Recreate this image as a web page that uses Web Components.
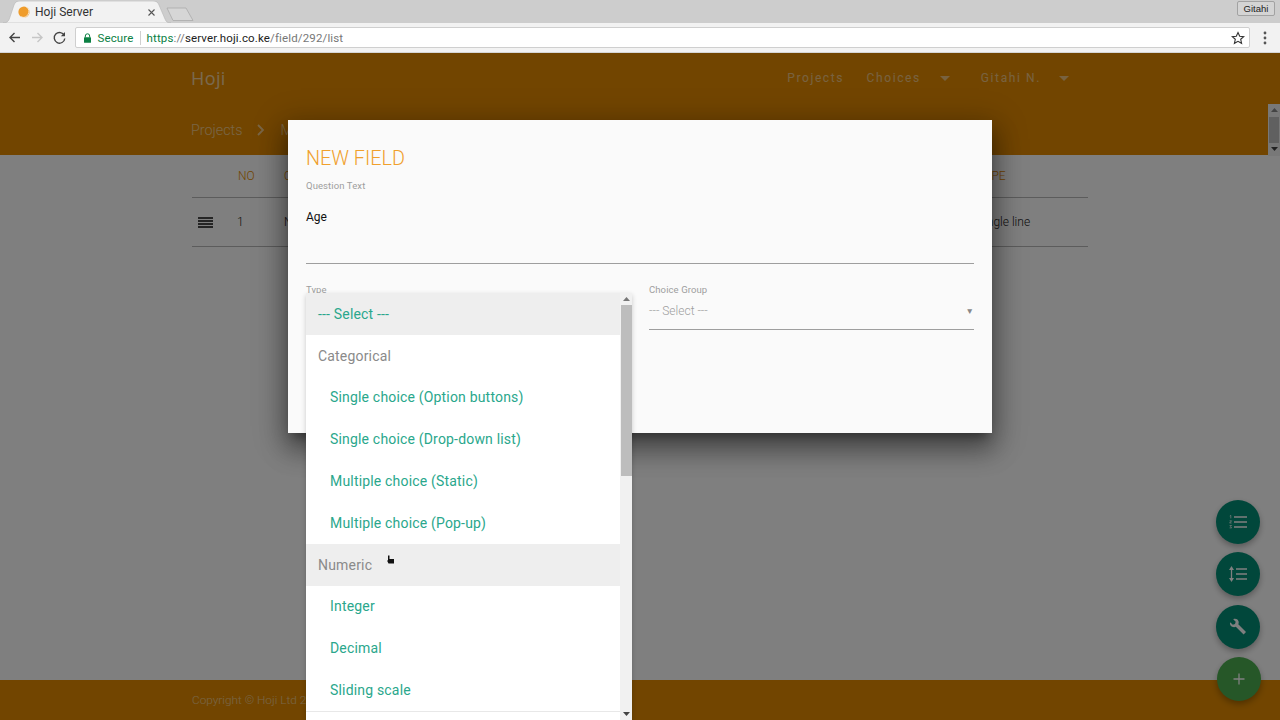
<!DOCTYPE html>
<html lang="en"><head><meta charset="utf-8"><title>Hoji Server</title>
<style>
html,body{margin:0;padding:0;height:720px;overflow:hidden;background:#fff;font-family:Roboto,"Liberation Sans",sans-serif}
</style></head><body>
<hoji-app></hoji-app>
<script>
function def(name, html){
  customElements.define(name, class extends HTMLElement{
    constructor(){super();this.attachShadow({mode:'open'}).innerHTML=html;}
  });
}
def('browser-chrome',`<style>
:host{display:block;height:53px;background:#cdcdcd;font-family:Roboto,"Liberation Sans",sans-serif;box-sizing:border-box}
.strip{height:23px;display:flex;align-items:flex-end;padding-left:8px;position:relative}
.tab{width:157px;height:22px;position:relative;display:flex;align-items:center;padding:0 0 0 10px;box-sizing:border-box;font-size:12px;color:#333}
.tab svg.shape{position:absolute;left:-5px;top:0}
.tab>*:not(.shape){position:relative}
.fav{width:12px;height:12px;margin-right:5px}
.t{flex:1}
.x{width:9px;height:9px;margin-right:9px}
.new{width:28px;height:15px;margin-left:1px;margin-bottom:1px}
.user{position:absolute;right:5px;top:1px;width:36px;height:13px;border:1px solid #a2a2a2;border-radius:2px;font-size:9.500px;line-height:13px;text-align:center;color:#222;background:#d4d4d4;font-family:"Liberation Sans",sans-serif}
.bar{height:30px;background:#f2f2f2;display:flex;align-items:center;box-sizing:border-box;border-bottom:1px solid #d6d6d6;padding:0 0 0 7px}
.nav{width:15px;height:15px;margin-right:7.500px;display:block}
.omni{flex:1;height:21px;background:#fff;border:1px solid #cfcfcf;border-radius:2px;display:flex;align-items:center;font-size:11.500px;box-sizing:border-box;letter-spacing:.14px}
.lock{width:9px;height:10px;margin-left:7px;margin-right:6px}
.sec{color:#0b8043}
.sep{width:1px;height:14px;background:#d0d0d0;margin:0 6px 0 6px}
.s{color:#0b8043}.g{color:#777}.d{color:#222}
.url{flex:1}
.star{width:14px;height:14px;margin-right:4px}
.menu{width:16px;height:16px;margin:0 7px}
</style>
<div class="strip">
<div class="tab"><svg class="shape" width="176" height="22" viewBox="0 0 176 22"><path d="M0 22C5 22 6 19 7 16L11 4C12 1 14 0 17 0H150C153 0 155 1 156 4L162 18C163 21 165 22 168 22Z" fill="#f2f2f2" stroke="#b5b5b5" stroke-width=".6"/></svg>
<svg class="fav" viewBox="0 0 12 12"><circle cx="6" cy="6" r="5.600" fill="#ef9c2b"/><path d="M8.600 1.200A5.600 5.600 0 0 1 3 10.800" fill="none" stroke="#f7f7f7" stroke-width=".8"/></svg>
<span class="t">Hoji Server</span>
<svg class="x" viewBox="0 0 9 9"><path d="M1.500 1.500l6 6M7.500 1.500l-6 6" stroke="#555" stroke-width="1.100"/></svg></div>
<svg class="new" viewBox="0 0 28 15"><path d="M1 1H20L27 13.500H7Z" fill="#d6d6d6" stroke="#a9a9a9" stroke-width=".8"/></svg>
<div class="user">Gitahi</div>
</div>
<div class="bar">
<svg class="nav" viewBox="0 0 15 15"><path d="M13 7.500H3M7.500 3L3 7.500 7.500 12" fill="none" stroke="#444" stroke-width="1.400"/></svg>
<svg class="nav" viewBox="0 0 15 15"><path d="M2 7.500H12M7.500 3L12 7.500 7.500 12" fill="none" stroke="#c6c6c6" stroke-width="1.400"/></svg>
<svg class="nav" viewBox="0 0 15 15"><path d="M12.300 5.500A5.300 5.300 0 1 0 12.800 8.500" fill="none" stroke="#444" stroke-width="1.400"/><path d="M13 2V6.200H8.800Z" fill="#444"/></svg>
<div class="omni">
<svg class="lock" viewBox="0 0 9 10"><path d="M2.300 4.500V3a2.200 2.200 0 0 1 4.400 0V4.500" fill="none" stroke="#0b8043"/><rect x="1" y="4.300" width="7" height="5.500" rx=".6" fill="#0b8043"/></svg>
<span class="sec">Secure</span><span class="sep"></span>
<span class="url"><span class="s">https</span><span class="g">://</span><span class="d">server.hoji.co.ke</span><span class="g">/field/292/list</span></span>
<svg class="star" viewBox="0 0 14 14"><path d="M7 1.500l1.700 3.700 4 .4-3 2.700.9 4L7 10.300l-3.600 2 .9-4-3-2.700 4-.4Z" fill="none" stroke="#333" stroke-width="1.100"/></svg>
</div>
<svg class="menu" viewBox="0 0 16 16"><circle cx="8" cy="3" r="1.400" fill="#555"/><circle cx="8" cy="8" r="1.400" fill="#555"/><circle cx="8" cy="13" r="1.400" fill="#555"/></svg>
</div>`);

def('app-header',`<style>
:host{display:block;height:102px;background:#e48b00;color:#fff;box-sizing:border-box;padding:0 211px 0 191px}
.top{height:50px;display:flex;align-items:center;justify-content:space-between}
.brand{font:500 18px "Open Sans","Liberation Sans",sans-serif;letter-spacing:.4px;opacity:.62}
nav{display:flex;align-items:center;font:400 12px Roboto,sans-serif;letter-spacing:1.600px;color:#ffffff;opacity:.5}
nav span{display:block}
.caret{width:0;height:0;border:5px solid transparent;border-top:5px solid #fff;border-bottom:0;margin:0 0 0 19px}
.caret.last{margin-left:18px}
.gap{width:31px}
.crumbs{height:52px;display:flex;align-items:center;font:300 14.300px Roboto,sans-serif;padding-top:2px;box-sizing:border-box;opacity:.55}
.crumbs svg{margin:0 14px}
</style>
<div class="top"><div class="brand">Hoji</div>
<nav><span>Projects</span><span style="width:22.500px"></span><span>Choices</span><span class="caret"></span><span class="gap"></span><span>Gitahi N.</span><span class="caret last"></span></nav></div>
<div class="crumbs"><span>Projects</span><svg width="10" height="12" viewBox="0 0 10 12"><path d="M2 1l5 5-5 5" fill="none" stroke="#fff" stroke-width="1.800"/></svg><span>M</span></div>`);

def('field-table',`<style>
:host{display:block;margin:0 192px;font:300 12px Roboto,sans-serif;color:#222}
.row{display:grid;grid-template-columns:46px 46px 1fr 111px;align-items:center;box-sizing:border-box;border-bottom:1px solid #b8b8b8}
.head{height:43px;color:#e48b00;font-size:12px}
.body{height:49px;font-size:12px}
.ic{width:15px;height:11px;margin-left:6px;display:block}
.n{margin-left:-1px}
</style>
<div class="row head"><span></span><span>NO</span><span>Q</span><span>TYPE</span></div>
<div class="row body"><svg class="ic" viewBox="0 0 15 11"><path d="M0 1h15M0 4h15M0 7h15M0 10h15" stroke="#111" stroke-width="1.300"/></svg><span class="n">1</span><span>N</span><span>Single line</span></div>`);

def('app-footer',`<style>
:host{display:block;height:40px;background:#e48b00;box-sizing:border-box;padding:13px 0 0 192px;font:300 11.800px Roboto,sans-serif;color:#fff}
span{opacity:.55}
</style><span>Copyright © Hoji Ltd 2017</span>`);

def('form-field',`<style>
:host{display:block;font-family:Roboto,sans-serif}
.l{font-size:9.500px;color:#9e9e9e;letter-spacing:.1px;line-height:12px;display:block}
</style><span class="l"><slot name="label"></slot></span><slot></slot>`);

def('field-modal',`<style>
:host{display:block;width:704px;height:313px;background:#fafafa;box-sizing:border-box;padding:27px 18px 0;box-shadow:0 16px 24px 2px rgba(0,0,0,.32),0 6px 30px 5px rgba(0,0,0,.22),0 8px 10px -5px rgba(0,0,0,.35);font-family:Roboto,sans-serif}
h2{margin:0;font:300 19.800px/24px Roboto,sans-serif;color:#f0a02c;height:33px}
.val{font-size:12px;color:#111;padding-top:17px;box-sizing:border-box;line-height:16px;height:72px;border-bottom:1px solid #9e9e9e}
.cols{display:grid;grid-template-columns:325px 325px;column-gap:18px;margin-top:20px}
.sel{height:34px;border-bottom:1px solid #9e9e9e;display:flex;justify-content:space-between;align-items:center;font-size:12px;font-weight:300;color:#9e9e9e;padding-bottom:3px;box-sizing:border-box}
.arr{font-size:8.500px;color:#888;font-family:"DejaVu Sans",sans-serif}
</style>
<h2>NEW FIELD</h2>
<form-field><span slot="label">Question Text</span><div class="val">Age</div></form-field>
<div class="cols">
<form-field><span slot="label">Type</span><div class="sel"></div></form-field>
<form-field><span slot="label">Choice Group</span><div class="sel"><span>--- Select ---</span><span class="arr">▼</span></div></form-field>
</div>`);

def('select-option',`<style>
:host{display:flex;align-items:center;height:41.800px;box-sizing:border-box;padding-left:24px;font:400 14px Roboto,sans-serif;color:#2aa78c;white-space:nowrap;letter-spacing:.18px}
:host([top]){padding-left:12px}
:host([group]){padding-left:12px;color:#8a8a8a}
:host([active]){background:#eeeeee}
</style><slot></slot>`);

def('select-menu',`<style>
:host{display:flex;width:326px;height:427px;background:#fff;box-shadow:0 2px 5px rgba(0,0,0,.2);overflow:hidden}
.list{width:314px;flex:none;overflow:hidden}
.track{width:12px;flex:none;background:#f1f1f1;display:flex;flex-direction:column;align-items:center}
.b{height:12px;flex:none;display:flex;align-items:center;justify-content:center}
.thumb{width:11px;height:171px;background:#bdbdbd;flex:none}
.sp{flex:1}
.end{border-top:1px solid #e8e8e8;height:9px}
</style>
<div class="list"><slot></slot><div class="end"></div></div>
<div class="track"><div class="b"><svg width="7" height="4" viewBox="0 0 7 4"><path d="M3.500 0L7 4H0Z" fill="#777"/></svg></div><div class="thumb"></div><div class="sp"></div><div class="b"><svg width="7" height="4" viewBox="0 0 7 4"><path d="M0 0H7L3.500 4Z" fill="#444"/></svg></div></div>`);

def('fab-button',`<style>
:host{display:flex;width:44px;height:44px;border-radius:50%;align-items:center;justify-content:center;background:var(--bg,#028f76);box-shadow:0 3px 6px rgba(0,0,0,.3)}
</style><slot></slot>`);

def('fab-stack',`<style>
:host{display:flex;flex-direction:column;gap:8.500px}
</style><slot></slot>`);

def('page-scrollbar',`<style>
:host{display:flex;flex-direction:column;align-items:center;width:12px;height:52px;background:#f1f1f1;justify-content:space-between}
.t{width:10px;height:26px;background:#c1c1c1;flex:none}
</style><svg width="7" height="13" viewBox="0 0 7 13"><path d="M3.500 4L7 8H0Z" fill="#888"/></svg><div class="t"></div><svg width="7" height="13" viewBox="0 0 7 13"><path d="M0 4H7L3.500 8Z" fill="#444"/></svg>`);

def('hoji-app',`<style>
:host{display:flex;flex-direction:column;width:1280px;height:720px;position:relative;overflow:hidden}
.page{flex:1;position:relative;display:flex;flex-direction:column;min-height:0;background:#fff}
.main{flex:1}
.veil{position:absolute;inset:0;background:rgba(0,0,0,.5)}
field-modal{position:absolute;left:288px;top:67px}
select-menu{position:absolute;left:306px;top:240px}
fab-stack{position:absolute;left:1216px;top:446.500px}
.plus{position:absolute;left:1217px;top:604px}
page-scrollbar{position:absolute;right:0;top:51px}
svg{display:block}
</style>
<browser-chrome></browser-chrome>
<div class="page">
<app-header></app-header>
<div class="main"><field-table></field-table></div>
<app-footer></app-footer>
<page-scrollbar></page-scrollbar>
<fab-stack>
<fab-button><svg width="18" height="14" viewBox="0 0 18 14"><path d="M5 2h13M5 7h13M5 12h13" stroke="#fff" stroke-width="1.300"/><path d="M.8 1l1-.6V3.400M.6 5.800h2L.6 8h2M.6 10.500h2l-1 1.200 1 1.200h-2" fill="none" stroke="#fff" stroke-width=".7"/></svg></fab-button>
<fab-button><svg width="18" height="16" viewBox="0 0 18 16"><path d="M7 3h11M7 8h11M7 13h11" stroke="#fff" stroke-width="1.500"/><path d="M2.500 2v12" stroke="#fff" stroke-width="1.300"/><path d="M0 4l2.500-4L5 4ZM0 12l2.500 4L5 12Z" fill="#fff"/></svg></fab-button>
<fab-button><svg width="18" height="18" viewBox="0 0 18 18"><path d="M1.200 4.200L3.800 6.700 6 6 6.700 3.800 4.200 1.200C6.300.3 8.600 1 9.400 3 9.900 4.100 9.800 5.300 9.300 6.300L17 13.900 14.600 16.500 6.800 8.800C5.600 9.300 4.300 9.300 3.100 8.700 1.300 7.800.5 6 1.200 4.200Z" fill="#fff"/></svg></fab-button>
</fab-stack>
<fab-button class="plus" style="--bg:#4caf50"><svg width="12" height="12" viewBox="0 0 12 12"><path d="M6 .5v11M.5 6h11" stroke="#fff" stroke-width="1.300"/></svg></fab-button>
<div class="veil"></div>
<field-modal></field-modal>
<select-menu>
<select-option top active>--- Select ---</select-option>
<select-option group>Categorical</select-option>
<select-option>Single choice (Option buttons)</select-option>
<select-option>Single choice (Drop-down list)</select-option>
<select-option>Multiple choice (Static)</select-option>
<select-option>Multiple choice (Pop-up)</select-option>
<select-option group active>Numeric</select-option>
<select-option>Integer</select-option>
<select-option>Decimal</select-option>
<select-option>Sliding scale</select-option>
</select-menu>
<svg style="position:absolute;left:386px;top:501px" width="9" height="11" viewBox="0 0 9 11"><path d="M2 1.500h1.500V5H8v4.500H2.500L1 6.500H2Z" fill="#111"/></svg>
</div>`);
</script>
</body></html>
